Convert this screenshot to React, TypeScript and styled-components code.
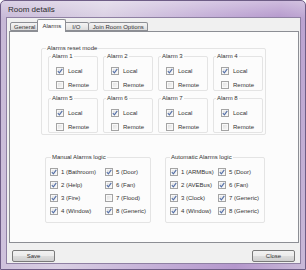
import React from 'react';
import styled, {createGlobalStyle} from "styled-components";

const GlobalStyle = createGlobalStyle`
  html, body {
    margin: 0;
    padding: 0;
    background: #ffffff;
  }
  * {
    box-sizing: border-box;
  }
`

const manualAlarms = [
  {label: '1 (Bathroom)', checked: true},
  {label: '2 (Help)', checked: true},
  {label: '3 (Fire)', checked: true},
  {label: '4 (Window)', checked: true},
  {label: '5 (Door)', checked: true},
  {label: '6 (Fan)', checked: true},
  {label: '7 (Flood)', checked: false},
  {label: '8 (Generic)', checked: true},
]

const autoAlarms = [
  {label: '1 (ARMBus)', checked: true},
  {label: '2 (AVEBus)', checked: true},
  {label: '3 (Clock)', checked: true},
  {label: '4 (Window)', checked: true},
  {label: '5 (Door)', checked: true},
  {label: '6 (Fan)', checked: true},
  {label: '7 (Generic)', checked: true},
  {label: '8 (Generic)', checked: true},
]

const tabs = [
  {name: 'General', width: 24},
  {name: 'Alarms', width: 25},
  {name: 'I/O', width: 25},
  {name: 'Join Room Options', width: 59},
]

const CheckBox = ({checked, label}: {checked: boolean; label: string}) => (
  <CheckRow>
    <Box>
      {checked && (
        <svg width="6" height="6" viewBox="0 0 6 6">
          <path d="M0.8 3.1 L2.4 4.8 L5.3 0.9" fill="none" stroke="#5570a8" strokeWidth="1.1"/>
        </svg>
      )}
    </Box>
    <span>{label}</span>
  </CheckRow>
)

const App = () => {
  return (
    <>
      <GlobalStyle/>
      <Window>
        <TitleBar>Room details</TitleBar>
        <Client>
          <TabStrip>
            {tabs.map(t => (
              <Tab key={t.name} $active={t.name === 'Alarms'} $width={t.width}>{t.name}</Tab>
            ))}
          </TabStrip>
          <Panel>
            <ResetGroup>
              <Legend $left={4}>Alarms reset mode</Legend>
              <AlarmGrid>
                {[1, 2, 3, 4, 5, 6, 7, 8].map(n => (
                  <AlarmBox key={n}>
                    <Legend $left={2}>Alarm {n}</Legend>
                    <AlarmChecks>
                      <CheckBox checked label="Local"/>
                      <CheckBox checked={false} label="Remote"/>
                    </AlarmChecks>
                  </AlarmBox>
                ))}
              </AlarmGrid>
            </ResetGroup>

            <LogicRow>
              <LogicGroup $width={106}>
                <Legend $left={5}>Manual Alarms logic</Legend>
                <LogicGrid $col={55}>
                  {manualAlarms.map(a => <CheckBox key={a.label} {...a}/>)}
                </LogicGrid>
              </LogicGroup>
              <LogicGroup $width={100}>
                <Legend $left={4}>Automatic Alarms logic</Legend>
                <LogicGrid $col={48}>
                  {autoAlarms.map(a => <CheckBox key={a.label} {...a}/>)}
                </LogicGrid>
              </LogicGroup>
            </LogicRow>
          </Panel>
          <Footer>
            <Button>Save</Button>
            <Button>Close</Button>
          </Footer>
        </Client>
      </Window>
    </>
  )
}

const Window = styled.div`
  width: 306px;
  height: 270px;
  display: flex;
  flex-direction: column;
  padding: 0 4px 5px 5px;
  border: 1px solid #6e5d86;
  border-radius: 5px 5px 0 0;
  background:
    linear-gradient(180deg, rgba(255,255,255,0.35) 0%, rgba(255,255,255,0) 18px),
    linear-gradient(100deg, #c6b7d6 0%, #d9cfe3 30%, #c2acd6 60%, #b497cc 80%, #c9b9d8 100%);
  font-family: "Liberation Sans", Arial, sans-serif;
  font-size: 6px;
  color: #333333;
`

const TitleBar = styled.div`
  height: 16px;
  display: flex;
  align-items: center;
  padding-left: 2px;
  font-size: 8px;
  color: #2a2a2a;
`

const Client = styled.div`
  flex: 1;
  display: flex;
  flex-direction: column;
  background: #f0f0f0;
  border: 1px solid #8f80a3;
  padding: 1px 3px 0 2px;
`

const TabStrip = styled.div`
  height: 12px;
  display: flex;
  align-items: flex-end;
  padding-left: 1px;
  position: relative;
  z-index: 1;
`

type TabProps = {
  $active: boolean;
  $width: number;
}

const Tab = styled.div<TabProps>`
  min-width: ${({$width, $active}) => $active ? $width + 4 : $width}px;
  height: ${({$active}) => $active ? '13px' : '9px'};
  margin: ${({$active}) => $active ? '0 -2px -1px -2px' : '0'};
  padding: 0 3px;
  display: flex;
  align-items: center;
  justify-content: center;
  border: 1px solid #8c8e94;
  border-bottom: ${({$active}) => $active ? 'none' : '1px solid #8c8e94'};
  border-left-width: ${({$active}) => $active ? '1px' : '0'};
  border-radius: 2px 2px 0 0;
  background: ${({$active}) => $active
    ? '#fcfcfc'
    : 'linear-gradient(180deg, #f4f4f4 0%, #e9e9e9 50%, #dcdcdc 100%)'};
  position: relative;
  z-index: ${({$active}) => $active ? 2 : 1};
  white-space: nowrap;

  &:first-child {
    border-left-width: 1px;
  }
`

const Panel = styled.div`
  width: 290px;
  height: 212px;
  border: 1px solid #8c8e94;
  background: #fcfcfc;
  padding: 16px 0 0 31px;
  display: flex;
  flex-direction: column;
  gap: 22px;
`

const GroupBox = styled.div`
  position: relative;
  border: 1px solid #e4e4e4;
  border-radius: 2px;
`

type LegendProps = {
  $left: number;
}

const Legend = styled.span<LegendProps>`
  position: absolute;
  top: -5px;
  left: ${({$left}) => $left}px;
  padding: 0 1px;
  line-height: 8px;
  background: #fcfcfc;
  white-space: nowrap;
`

const ResetGroup = styled(GroupBox)`
  width: 225px;
  padding: 7px 3px 1px 6px;
`

const AlarmGrid = styled.div`
  display: grid;
  grid-template-columns: repeat(4, 50px);
  column-gap: 5px;
  row-gap: 7px;
`

const AlarmBox = styled(GroupBox)`
  height: 35px;
  padding: 7px 0 0 7px;
`

const AlarmChecks = styled.div`
  display: flex;
  flex-direction: column;

  & > div {
    height: 14px;
    gap: 4px;
  }
`

const LogicRow = styled.div`
  display: flex;
  gap: 14px;
  padding-left: 4px;
`

type LogicGroupProps = {
  $width: number;
}

const LogicGroup = styled(GroupBox)<LogicGroupProps>`
  width: ${({$width}) => $width}px;
  height: 66px;
  padding: 7px 0 0 4px;
`

type LogicGridProps = {
  $col: number;
}

const LogicGrid = styled.div<LogicGridProps>`
  display: grid;
  grid-auto-flow: column;
  grid-template-rows: repeat(4, 13px);
  grid-template-columns: ${({$col}) => $col}px auto;
`

const CheckRow = styled.div`
  display: flex;
  align-items: center;
  gap: 3px;
  white-space: nowrap;
`

const Box = styled.span`
  width: 8px;
  height: 8px;
  flex: none;
  display: flex;
  align-items: center;
  justify-content: center;
  border: 1px solid #a4a4a4;
  background: linear-gradient(135deg, #dedede 0%, #efefef 60%, #fbfbfb 100%);
  box-shadow: inset 0 0 0 1px #f8f8f8;
`

const Footer = styled.div`
  display: flex;
  justify-content: space-between;
  padding: 7px 2px 0 3px;
`

const Button = styled.button`
  width: 43px;
  height: 12px;
  padding: 0;
  border: 1px solid #7a7a7a;
  border-radius: 2px;
  background: linear-gradient(180deg, #f2f2f2 0%, #ebebeb 50%, #dddddd 51%, #cfcfcf 100%);
  font-family: "Liberation Sans", Arial, sans-serif;
  font-size: 6px;
  color: #333333;
  line-height: 10px;
`

export default App
